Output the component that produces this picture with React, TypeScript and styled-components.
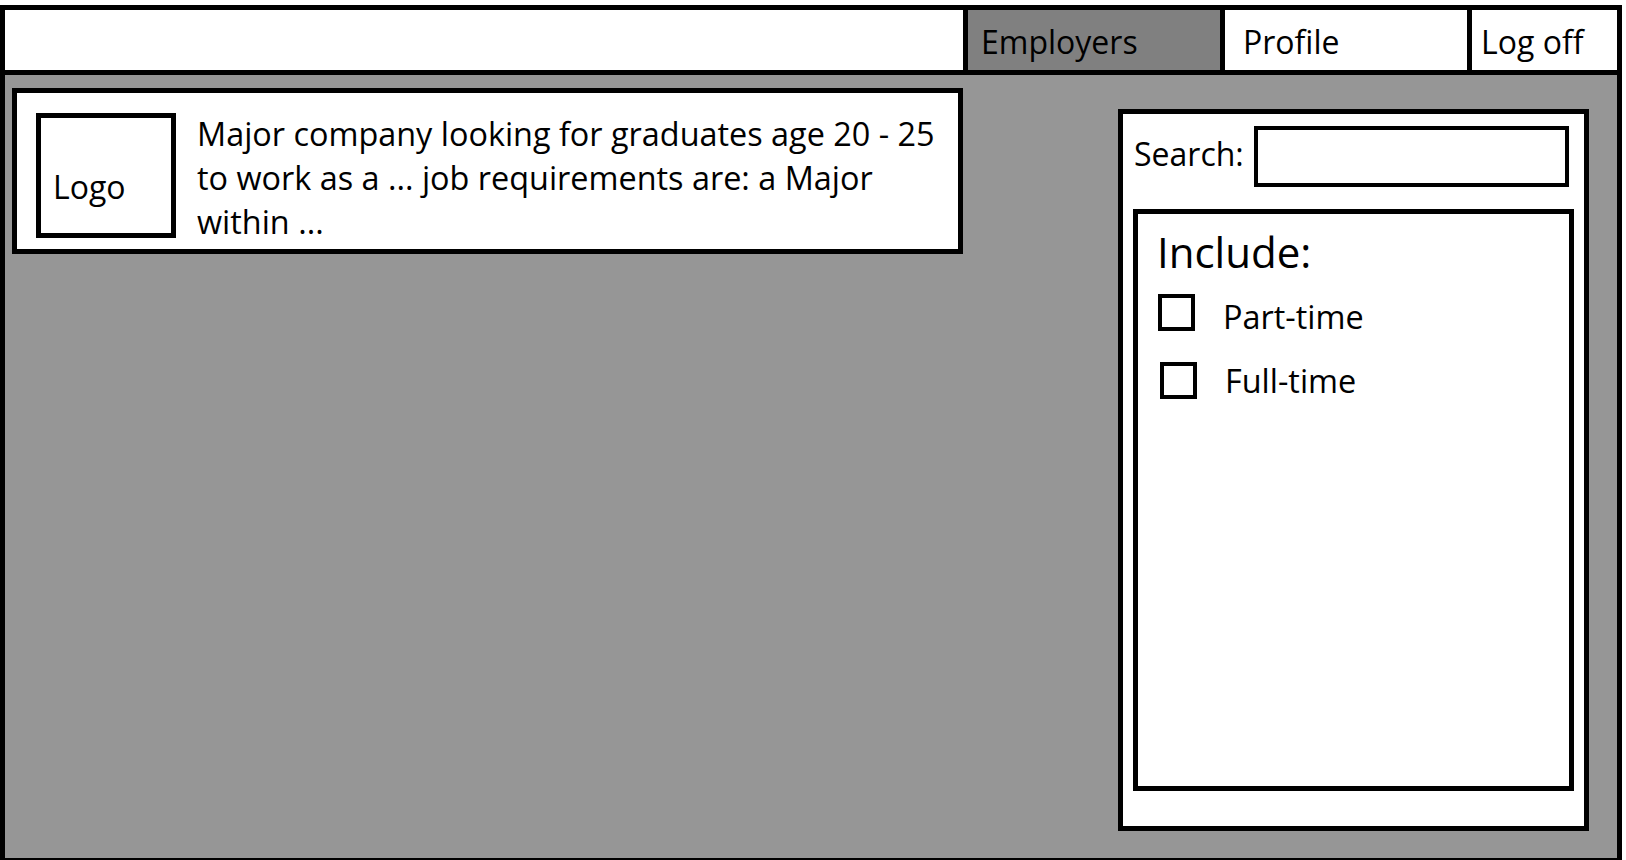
import styled, { createGlobalStyle } from 'styled-components';

const GlobalStyle = createGlobalStyle`
    html, body {
        margin: 0;
        padding: 0;
        background: #ffffff;
        overflow: hidden;
    }

    body {
        font-family: "Open Sans", "Liberation Sans", sans-serif;
        color: #000000;
    }
`

type NavItem = {
    label: string;
    width: number;
    pad: number;
    active?: boolean;
}

const navItems: NavItem[] = [
    { label: 'Employers', width: 257, pad: 13, active: true },
    { label: 'Profile', width: 247, pad: 18 },
    { label: 'Log off', width: 150, pad: 9 },
];

const filters = [
    { label: 'Part-time', offset: 0, lift: 0 },
    { label: 'Full-time', offset: 2, lift: 4 },
];

const App = () => {
    return (
        <>
            <GlobalStyle />
            <Frame>
                <Header>
                    <HeaderSpacer />
                    {navItems.map((item) => (
                        <NavCell
                            key={item.label}
                            $width={item.width}
                            $pad={item.pad}
                            $active={item.active}
                        >
                            {item.label}
                        </NavCell>
                    ))}
                </Header>
                <Content>
                    <JobCard>
                        <LogoBox>Logo</LogoBox>
                        <JobText>
                            <JobLine>Major company looking for graduates age 20 - 25</JobLine>
                            <JobLine>to work as a ... job requirements are: a Major</JobLine>
                            <JobLine>within ...</JobLine>
                        </JobText>
                    </JobCard>
                    <SidePanel>
                        <SearchRow>
                            <SearchLabel>Search:</SearchLabel>
                            <SearchInput type="text" />
                        </SearchRow>
                        <IncludeBox>
                            <IncludeTitle>Include:</IncludeTitle>
                            <FilterList>
                                {filters.map((f) => (
                                    <FilterRow key={f.label} $offset={f.offset}>
                                        <CheckBox />
                                        <FilterLabel $lift={f.lift}>{f.label}</FilterLabel>
                                    </FilterRow>
                                ))}
                            </FilterList>
                        </IncludeBox>
                    </SidePanel>
                </Content>
            </Frame>
        </>
    )
}

export default App

const Frame = styled.div`
    box-sizing: border-box;
    margin-top: 5px;
    width: 1622px;
    height: 858px;
    border: 5px solid #000;
    display: flex;
    flex-direction: column;
`

const Header = styled.div`
    display: flex;
    height: 60px;
    border-bottom: 5px solid #000;
    background: #fff;
    flex-shrink: 0;
`

const HeaderSpacer = styled.div`
    flex: 1;
`

const NavCell = styled.div<{ $width: number; $pad: number; $active?: boolean }>`
    box-sizing: border-box;
    width: ${(p) => p.$width}px;
    border-left: 5px solid #000;
    background: ${(p) => (p.$active ? '#808080' : '#ffffff')};
    padding: 10px 0 0 ${(p) => p.$pad}px;
    font-size: 32px;
    line-height: 44px;
    white-space: nowrap;
`

const Content = styled.div`
    flex: 1;
    display: flex;
    justify-content: space-between;
    align-items: flex-start;
    background: #969696;
`

const JobCard = styled.div`
    box-sizing: border-box;
    width: 951px;
    height: 166px;
    margin: 13px 0 0 7px;
    border: 5px solid #000;
    background: #fff;
    display: flex;
    align-items: flex-start;
    padding: 18px 0 0 19px;
`

const LogoBox = styled.div`
    box-sizing: border-box;
    width: 140px;
    height: 125px;
    margin-top: 2px;
    border: 5px solid #000;
    padding: 47px 0 0 12px;
    font-size: 32px;
    line-height: 44px;
`

const JobText = styled.div`
    margin-left: 21px;
    font-size: 32.4px;
    line-height: 44px;
`

const JobLine = styled.div`
    white-space: nowrap;
`

const SidePanel = styled.div`
    box-sizing: border-box;
    width: 471px;
    height: 722px;
    margin: 34px 28px 0 0;
    border: 5px solid #000;
    background: #fff;
    padding: 12px 10px 35px 10px;
    display: flex;
    flex-direction: column;
`

const SearchRow = styled.div`
    display: flex;
    align-items: flex-start;
    padding: 0 5px 0 1px;
`

const SearchLabel = styled.div`
    margin-top: 6px;
    font-size: 32px;
    line-height: 44px;
`

const SearchInput = styled.input`
    box-sizing: border-box;
    margin-left: auto;
    width: 315px;
    height: 61px;
    border: 4px solid #000;
    border-radius: 0;
    outline: none;
    background: #fff;
    padding: 0 8px;
    font-family: inherit;
    font-size: 28px;
`

const IncludeBox = styled.div`
    box-sizing: border-box;
    flex: 1;
    margin-top: 22px;
    border: 5px solid #000;
    padding: 13px 0 0 19px;
`

const IncludeTitle = styled.div`
    font-size: 42px;
    line-height: 50px;
`

const FilterList = styled.div`
    margin-top: 17px;
    display: flex;
    flex-direction: column;
    gap: 24px;
`

const FilterRow = styled.div<{ $offset: number }>`
    display: flex;
    align-items: flex-start;
    padding-left: ${(p) => p.$offset + 1}px;
`

const CheckBox = styled.div`
    box-sizing: border-box;
    width: 37px;
    height: 37px;
    border: 4px solid #000;
    background: #fff;
    flex-shrink: 0;
`

const FilterLabel = styled.div<{ $lift: number }>`
    margin-left: 28px;
    margin-top: ${(p) => -p.$lift}px;
    font-size: 32.4px;
    line-height: 44px;
`
